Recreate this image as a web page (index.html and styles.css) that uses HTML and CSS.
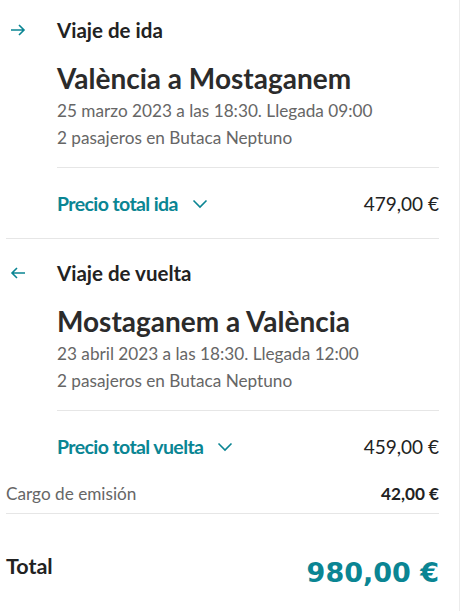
FILE: index.html
```html
<!DOCTYPE html>
<html lang="es">
<head>
  <meta charset="UTF-8">
  <meta name="viewport" content="width=device-width, initial-scale=1.0">
  <link rel="stylesheet" href="styles.css">
  <title>Resumen del viaje</title>
</head>
<body>
  <div class="summary">
    <div class="trip trip-first">
      <div class="trip-icon">
        <svg width="16" height="16" viewBox="0 0 16 16"><path d="M1 8h13M9 3l5 5-5 5" fill="none" stroke="#0a8593" stroke-width="1.6"/></svg>
      </div>
      <div class="trip-body">
        <div class="trip-label">Viaje de ida</div>
        <div class="trip-route">València a Mostaganem</div>
        <div class="trip-detail">25 marzo 2023 a las 18:30. Llegada 09:00</div>
        <div class="trip-detail">2 pasajeros en Butaca Neptuno</div>
        <div class="price-row">
          <span class="price-toggle">Precio total ida
            <svg class="chevron" width="16" height="10" viewBox="0 0 16 10"><path d="M1.5 1.5l6.5 6.5 6.5-6.5" fill="none" stroke="#0a8593" stroke-width="1.6"/></svg>
          </span>
          <span class="price">479,00 €</span>
        </div>
      </div>
    </div>

    <div class="trip">
      <div class="trip-icon">
        <svg width="16" height="16" viewBox="0 0 16 16"><path d="M15 8H2M7 3L2 8l5 5" fill="none" stroke="#0a8593" stroke-width="1.6"/></svg>
      </div>
      <div class="trip-body">
        <div class="trip-label">Viaje de vuelta</div>
        <div class="trip-route">Mostaganem a València</div>
        <div class="trip-detail">23 abril 2023 a las 18:30. Llegada 12:00</div>
        <div class="trip-detail">2 pasajeros en Butaca Neptuno</div>
        <div class="price-row">
          <span class="price-toggle">Precio total vuelta
            <svg class="chevron" width="16" height="10" viewBox="0 0 16 10"><path d="M1.5 1.5l6.5 6.5 6.5-6.5" fill="none" stroke="#0a8593" stroke-width="1.6"/></svg>
          </span>
          <span class="price">459,00 €</span>
        </div>
      </div>
    </div>

    <div class="fee-row">
      <span>Cargo de emisión</span>
      <span class="fee">42,00 €</span>
    </div>

    <div class="total-row">
      <span class="total-label">Total</span>
      <span class="total-value">980,00 €</span>
    </div>
  </div>
</body>
</html>
```

FILE: styles.css
```css
body {
  margin: 0;
  font-family: 'Lato', 'Liberation Sans', sans-serif;
  color: #222;
  background-color: #fff;
}

.summary {
  width: 433px;
  min-height: 611px;
  padding: 0 20px 0 6px;
  border-right: 1px solid #ececec;
}

.trip {
  display: flex;
  padding-top: 22px;
  border-top: 1px solid #e6e6e6;
}

.trip-first {
  padding-top: 18px;
  border-top: none;
}

.trip-icon {
  width: 51px;
  flex-shrink: 0;
  padding-left: 4px;
  box-sizing: border-box;
  height: 24px;
  display: flex;
  align-items: center;
}

.trip-body {
  flex: 1;
}

.trip-label {
  font-size: 20.5px;
  font-weight: 700;
  line-height: 24px;
}

.trip-route {
  font-size: 28px;
  font-weight: 700;
  line-height: 32px;
  margin-top: 20px;
  color: #2b2b2b;
}

.trip-detail {
  font-size: 17.2px;
  line-height: 27px;
  color: #666;
}

.trip-route + .trip-detail {
  margin-top: 3px;
}

.price-row {
  display: flex;
  justify-content: space-between;
  align-items: center;
  margin-top: 16px;
  padding: 24px 0 22px;
  border-top: 1px solid #e6e6e6;
  line-height: 24px;
}

.price-toggle {
  display: flex;
  align-items: center;
  font-size: 19.5px;
  font-weight: 700;
  letter-spacing: -0.6px;
  color: #0a8593;
}

.chevron {
  margin-left: 14px;
}

.price {
  font-size: 19px;
}

.fee-row {
  display: flex;
  justify-content: space-between;
  align-items: center;
  line-height: 24px;
  padding-top: 1px;
  padding-bottom: 7px;
  border-bottom: 1px solid #e6e6e6;
  font-size: 17.2px;
  color: #666;
}

.fee {
  font-weight: 700;
  color: #222;
  font-size: 17.2px;
}

.total-row {
  display: flex;
  justify-content: space-between;
  align-items: flex-start;
  padding-top: 40px;
}

.total-label {
  font-size: 21.5px;
  font-weight: 700;
  line-height: 24px;
}

.total-value {
  font-family: 'DejaVu Sans', sans-serif;
  font-size: 27px;
  font-weight: 700;
  line-height: 30px;
  margin-top: 4px;
  color: #0a8593;
}
```
